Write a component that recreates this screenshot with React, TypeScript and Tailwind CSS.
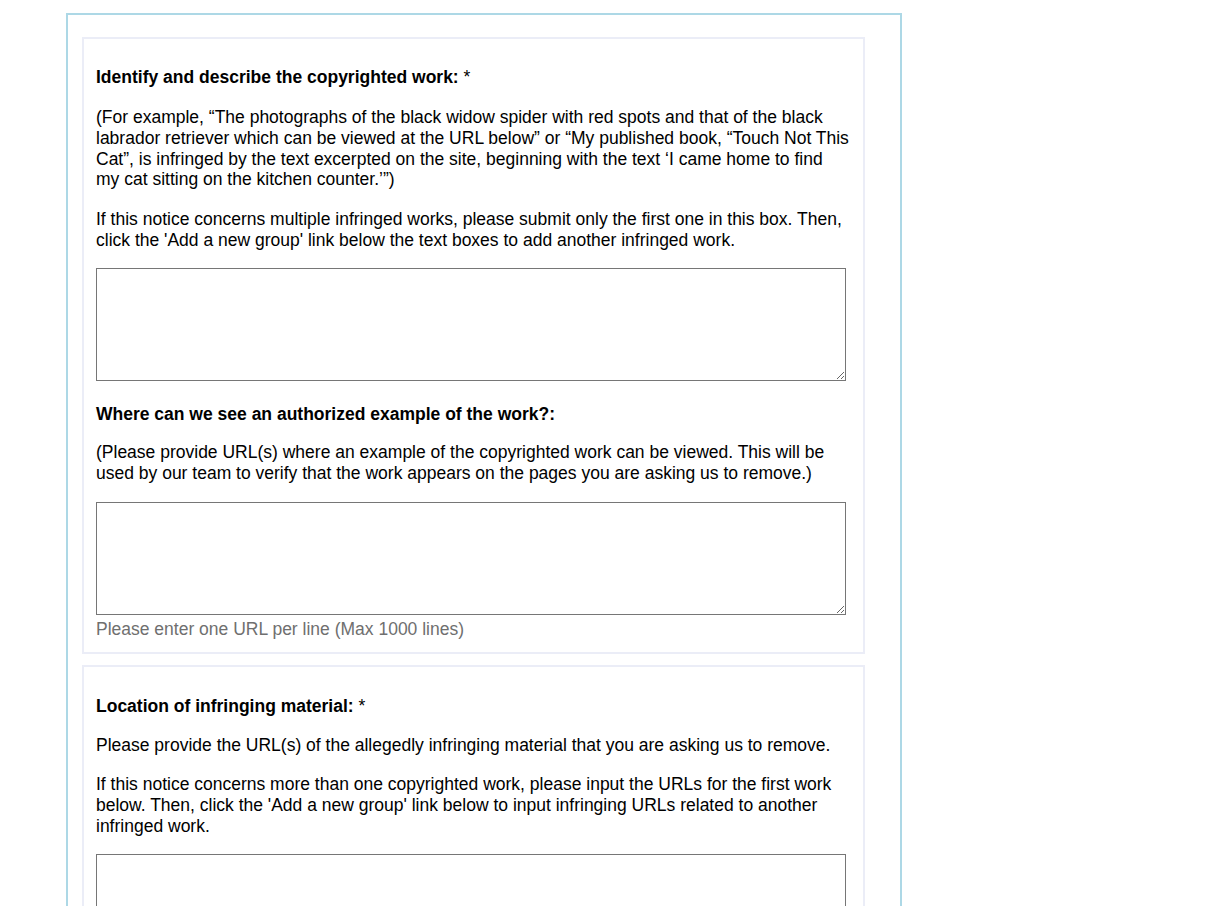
import React from 'react';

const Field: React.FC = () => (
  <div className="leading-[0]">
    <textarea className="w-[750px] h-[113px] border border-[#767676] bg-white align-baseline p-[2px] text-[13px] leading-normal" />
  </div>
);

export default function App() {
  return (
    <div className="min-h-screen bg-white text-black text-[17.5px] leading-[20.7px]" style={{ fontFamily: '"Liberation Sans", Arial, sans-serif' }}>
      <div className="ml-[66px] mt-[13px] w-[836px] border-2 border-[#add8e6] pl-[14px] pt-[22px] pb-10">
        {/* Copyrighted work */}
        <section className="w-[783px] border-2 border-[#ebedf7] pl-3 pr-[13px] pt-[27.6px] pb-[12.6px]">
          <h3 className="font-bold">
            Identify and describe the copyrighted work: <span className="font-normal">*</span>
          </h3>
          <p className="mt-[20px]">
            (For example, “The photographs of the black widow spider with red spots and that of the black labrador retriever which can be viewed at the URL below” or “My published book, “Touch Not This Cat”, is infringed by the text excerpted on the site, beginning with the text ‘I came home to find my cat sitting on the kitchen counter.’”)
          </p>
          <p className="mt-[19px]">
            If this notice concerns multiple infringed works, please submit only the first one in this box. Then, click the 'Add a new group' link below the text boxes to add another infringed work.
          </p>
          <div className="mt-[17.6px]">
            <Field />
          </div>
          <h3 className="font-bold mt-[22.6px]">Where can we see an authorized example of the work?:</h3>
          <p className="mt-[18px]">
            (Please provide URL(s) where an example of the copyrighted work can be viewed. This will be used by our team to verify that the work appears on the pages you are asking us to remove.)
          </p>
          <div className="mt-[18.6px]">
            <Field />
          </div>
          <p className="mt-[3.6px] text-[#6f6f6f]">Please enter one URL per line (Max 1000 lines)</p>
        </section>

        {/* Infringing material */}
        <section className="mt-[11px] w-[783px] border-2 border-[#ebedf7] pl-3 pr-[13px] pt-[28.6px] pb-[12.6px]">
          <h3 className="font-bold">
            Location of infringing material: <span className="font-normal">*</span>
          </h3>
          <p className="mt-[18px]">
            Please provide the URL(s) of the allegedly infringing material that you are asking us to remove.
          </p>
          <p className="mt-[19px]">
            If this notice concerns more than one copyrighted work, please input the URLs for the first work below. Then, click the 'Add a new group' link below to input infringing URLs related to another infringed work.
          </p>
          <div className="mt-[17.6px]">
            <Field />
          </div>
        </section>
      </div>
    </div>
  );
}
